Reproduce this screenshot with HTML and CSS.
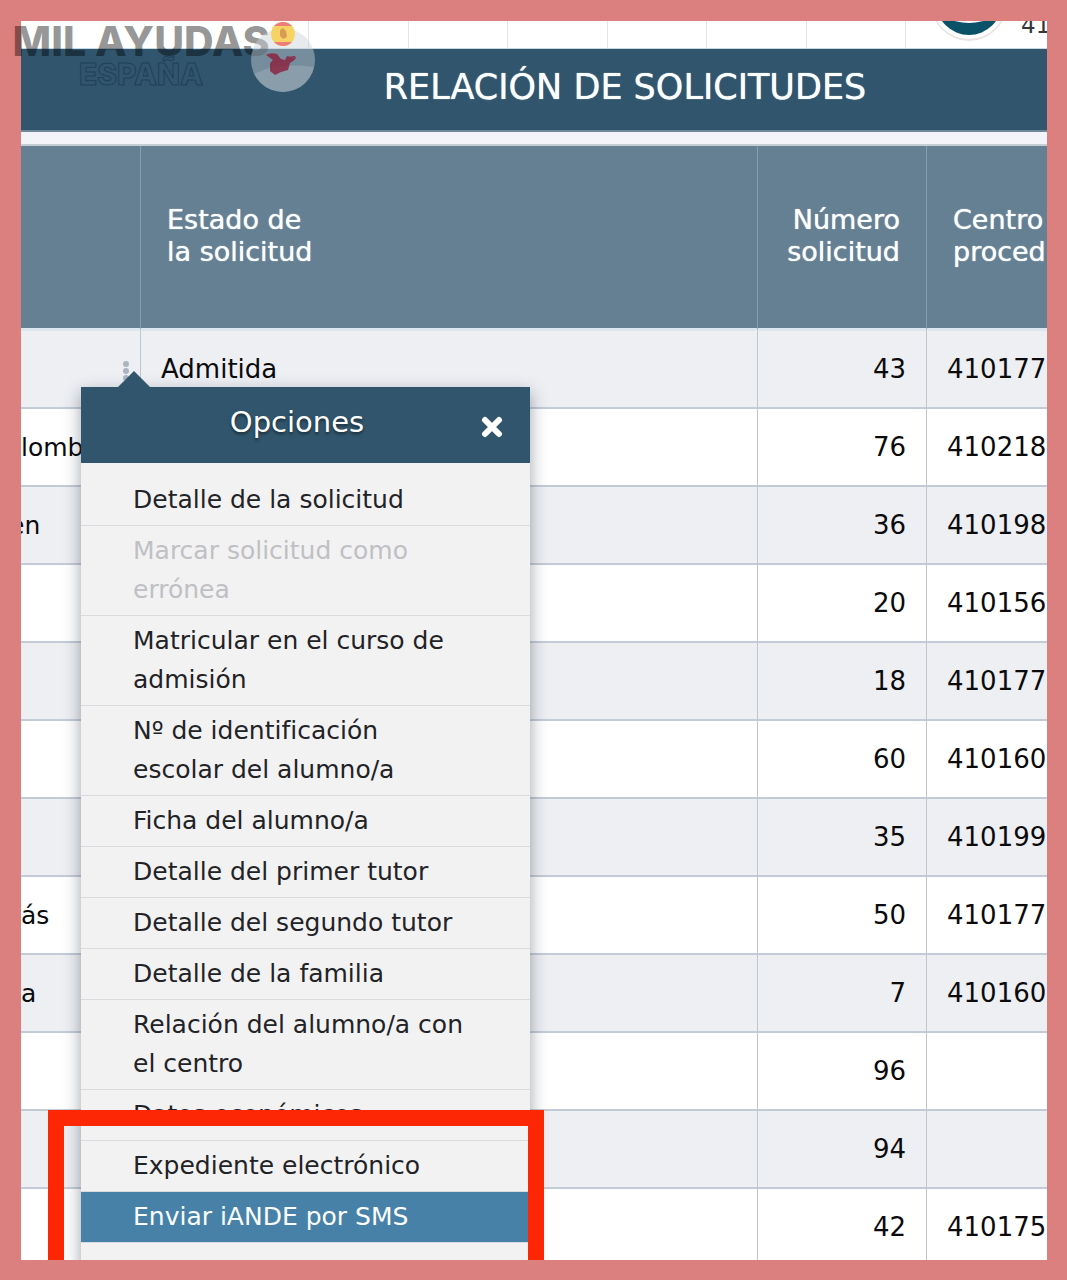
FILE: index.html
```html
<!DOCTYPE html>
<html lang="es">
<head>
    <meta charset="UTF-8">
    <meta name="viewport" content="width=device-width, initial-scale=1.0">
    <title>Relación de solicitudes</title>
    <link rel="stylesheet" href="styles.css">
</head>
<body>

    <main class="frame">

        <!-- Barra superior -->
        <div class="topbar">
            <div class="tabs">
                <span></span><span></span><span></span><span></span><span></span><span></span>
            </div>
            <svg class="avatar" viewBox="0 0 84 28" aria-hidden="true">
                <circle cx="42" cy="-18" r="38" fill="#e9e4e3"/>
                <circle cx="42" cy="-19" r="37" fill="#fff"/>
                <circle cx="42" cy="-19" r="33" fill="#0b5268"/>
                <ellipse cx="42" cy="-20" rx="34" ry="22" fill="#fff"/>
            </svg>
            <span class="center-code">41</span>
        </div>

        <h1 class="title">RELACIÓN DE SOLICITUDES</h1>

        <!-- Tabla de solicitudes -->
        <table class="requests">
            <colgroup>
                <col class="col-name">
                <col class="col-state">
                <col class="col-number">
                <col class="col-center">
            </colgroup>
            <thead>
                <tr>
                    <th></th>
                    <th>Estado de<br>la solicitud</th>
                    <th class="num">Número<br>solicitud</th>
                    <th>Centro<br>proced</th>
                </tr>
            </thead>
            <tbody>
                <tr>
                    <td class="options-cell">
                        <button class="dots" type="button" aria-label="Opciones">
                            <svg width="8" height="22" viewBox="0 0 8 22">
                                <circle cx="4" cy="4" r="3"/>
                                <circle cx="4" cy="11" r="3"/>
                                <circle cx="4" cy="18" r="3"/>
                            </svg>
                        </button>
                    </td>
                    <td>Admitida</td><td class="num">43</td><td>410177</td>
                </tr>
                <tr><td>lomb</td><td></td><td class="num">76</td><td>410218</td></tr>
                <tr><td class="cut">en</td><td></td><td class="num">36</td><td>410198</td></tr>
                <tr><td></td><td></td><td class="num">20</td><td>410156</td></tr>
                <tr><td></td><td></td><td class="num">18</td><td>410177</td></tr>
                <tr><td></td><td></td><td class="num">60</td><td>410160</td></tr>
                <tr><td></td><td></td><td class="num">35</td><td>410199</td></tr>
                <tr><td>ás</td><td></td><td class="num">50</td><td>410177</td></tr>
                <tr><td>a</td><td></td><td class="num">7</td><td>410160</td></tr>
                <tr><td></td><td></td><td class="num">96</td><td></td></tr>
                <tr><td></td><td></td><td class="num">94</td><td></td></tr>
                <tr><td></td><td></td><td class="num">42</td><td>410175</td></tr>
            </tbody>
        </table>

        <!-- Menú de opciones -->
        <div class="menu">
            <div class="menu-header">
                <h2>Opciones</h2>
                <button class="close" type="button" aria-label="Cerrar">
                    <svg width="22" height="22" viewBox="0 0 22 22">
                        <path d="M4 4 L18 18 M18 4 L4 18" stroke="#fff" stroke-width="6" stroke-linecap="round"/>
                    </svg>
                </button>
            </div>
            <ul>
                <li><button type="button">Detalle de la solicitud</button></li>
                <li><button type="button" disabled>Marcar solicitud como errónea</button></li>
                <li><button type="button">Matricular en el curso de admisión</button></li>
                <li><button type="button">Nº de identificación escolar del alumno/a</button></li>
                <li><button type="button">Ficha del alumno/a</button></li>
                <li><button type="button">Detalle del primer tutor</button></li>
                <li><button type="button">Detalle del segundo tutor</button></li>
                <li><button type="button">Detalle de la familia</button></li>
                <li><button type="button">Relación del alumno/a con el centro</button></li>
                <li><button type="button">Datos económicos</button></li>
                <li><button type="button">Expediente electrónico</button></li>
                <li><button class="active" type="button">Enviar iANDE por SMS</button></li>
            </ul>
        </div>

        <!-- Recuadro rojo -->
        <div class="highlight"></div>
    </main>

    <!-- Marca de agua -->
    <div class="watermark">
        <div class="brand">
            <span class="brand-name">MIL AYUDAS</span>
            <span class="brand-country">ESPAÑA</span>
        </div>
        <svg class="brand-logo" width="66" height="72" viewBox="0 0 66 72" aria-hidden="true">
            <circle cx="33" cy="40" r="32" fill="#c9d3da" opacity="0.45"/>
            <path d="M4 54 Q26 42 64 47 A32 32 0 0 1 4 54" fill="#dbe3e8" opacity="0.2"/>
            <path d="M16 35 Q20 32 27 34 L31 39 L35 40 L37 36 L46 38 L45 36 L40 36 L43 37 L46 38 Q43 42 40 43 L38 50 L31 52 L25 55 L20 51 L20 43 L23 40 Z" fill="#8c1f3c" opacity="0.8"/>
            <circle cx="33" cy="14" r="12" fill="#f6d365"/>
            <path d="M24 6 A12 12 0 0 1 42 6 Z M24 22 A12 12 0 0 0 42 22 Z" fill="#ee7c78"/>
            <path d="M30 10 L33 8 L36 11 L37 17 L33 19 L30 16 Z" fill="#d99a55"/>
        </svg>
    </div>

</body>
</html>
```
FILE: styles.css
```css
* {
    box-sizing: border-box;
}

body {
    margin: 0;
    height: 100vh;
    padding: 21px 20px 20px 21px;
    background: #dc807f;
    font-family: "DejaVu Sans", Verdana, sans-serif;
    font-size: 25px;
    color: #0b0b0d;
    overflow: hidden;
}

h1, h2, ul {
    margin: 0;
    padding: 0;
    font-weight: normal;
}

button {
    border: 0;
    padding: 0;
    background: none;
    font: inherit;
    color: inherit;
    cursor: pointer;
}

.frame {
    position: relative;
    height: 100%;
    background: #f2f4fa;
    overflow: hidden;
}

/* Barra superior */
.topbar {
    display: flex;
    height: 28px;
    padding-left: 287px;
    background: #fff;
    border-bottom: 1px solid #c5d9e5;
    overflow: hidden;
    white-space: nowrap;
}

.tabs {
    display: flex;
    flex: 0 0 598px;
    border-left: 1px solid #e4e4e9;
}

.tabs span {
    flex: 1;
    border-right: 1px solid #e4e4e9;
}

.avatar {
    flex: 0 0 84px;
    height: 28px;
    margin-left: 21px;
}

.center-code {
    padding-left: 10px;
    font-size: 23px;
    line-height: 8px;
    color: #33373c;
}

.title {
    height: 83px;
    padding-left: 182px;
    background: #30556c;
    border-bottom: 2px solid #6f889a;
    color: #fbffff;
    font-size: 35px;
    line-height: 77px;
    text-align: center;
    text-shadow: 0 0 1px #fbffff;
    white-space: nowrap;
}

/* Tabla */
.requests {
    width: 100%;
    margin-top: 12px;
    border-top: 2px solid #c3ced5;
    border-collapse: separate;
    border-spacing: 0;
    table-layout: fixed;
    white-space: nowrap;
}

.col-name {
    width: 120px;
}

.col-number {
    width: 169px;
}

.col-center {
    width: 120px;
}

.requests th {
    height: 185px;
    padding: 0 26px 2px;
    background: #668093;
    border-right: 1px solid #86a0b3;
    border-bottom: 3px solid #dce6ef;
    color: #fbffff;
    font-size: 27px;
    font-weight: normal;
    line-height: 32px;
    text-align: left;
    text-shadow: 0 0 1px #fbffff;
    overflow: hidden;
}

.requests td {
    height: 78px;
    padding: 0 20px;
    background: #fff;
    border-right: 1px solid #bcc6d0;
    border-bottom: 2px solid #c3cbd6;
    font-size: 26px;
    overflow: hidden;
}

.requests tr:nth-child(odd) td {
    background: #edeff3;
}

.requests td:first-child {
    padding: 0;
    font-size: 25px;
}

.requests th:last-child,
.requests td:last-child {
    padding-right: 0;
    border-right: 0;
}

.requests .num {
    text-align: right;
}

/* nombre cortado por el borde izquierdo */
.requests .cut {
    text-indent: -12px;
}

.requests .options-cell {
    text-align: right;
}

.dots {
    padding: 10px 10px 0 0;
}

.dots svg {
    display: block;
    fill: #aab5c0;
}

/* Menú de opciones */
.menu {
    position: absolute;
    top: 366px;
    left: 60px;
    width: 449px;
    min-height: 900px;
    background: #f2f2f3;
    box-shadow: 0 6px 16px rgba(40, 50, 65, 0.45);
}

.menu::before {
    content: "";
    position: absolute;
    top: -16px;
    left: 37px;
    border: 16px solid transparent;
    border-top: 0;
    border-bottom-color: #30556c;
}

.menu-header {
    display: flex;
    align-items: center;
    height: 76px;
    padding: 0 27px 0 32px;
    background: #30556c;
    color: #fff;
}

.menu-header h2 {
    flex: 1;
    padding-bottom: 6px;
    font-size: 29px;
    text-align: center;
    text-shadow: 0 2px 3px rgba(0, 0, 0, 0.5);
}

.close {
    padding-top: 4px;
}

.close svg {
    display: block;
}

.menu ul {
    padding-top: 12px;
    list-style: none;
}

.menu li {
    border-bottom: 1px solid #d9dbde;
}

.menu li button {
    display: block;
    width: 100%;
    padding: 5px 60px 6px 52px;
    color: #222326;
    line-height: 39px;
    text-align: left;
}

.menu li button:disabled {
    color: #bfc0c3;
}

.menu li .active {
    background: #4881a8;
    color: #fbffff;
}

/* Recuadro rojo */
.highlight {
    position: absolute;
    top: 1089px;
    left: 27px;
    width: 496px;
    height: 200px;
    border: 16px solid #fd2706;
}

/* Marca de agua */
.watermark {
    position: absolute;
    top: 20px;
    left: 15px;
    display: flex;
}

.brand {
    display: flex;
    flex-direction: column;
    align-items: center;
    width: 252px;
    margin-right: -17px;
    font-family: Inter, "Liberation Sans", sans-serif;
    font-weight: 800;
    white-space: nowrap;
}

.brand-name {
    color: rgba(0, 0, 0, 0.42);
    font-size: 41px;
    line-height: 42px;
}

.brand-country {
    color: transparent;
    font-size: 30px;
    line-height: 24px;
    -webkit-text-stroke: 1px rgba(20, 50, 70, 0.6);
}
```
